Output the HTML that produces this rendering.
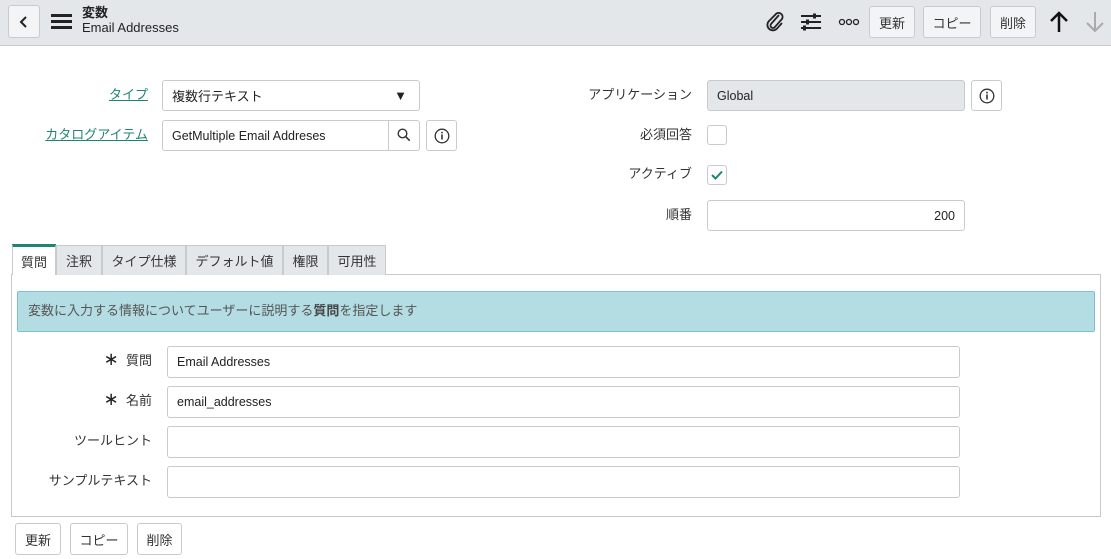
<!DOCTYPE html>
<html><head><meta charset="utf-8"><style>
*{box-sizing:border-box;margin:0;padding:0}
body{width:1111px;height:559px;background:#fff;font-family:"Liberation Sans","Noto Sans CJK JP",sans-serif;font-size:13px;color:#333;position:relative;overflow:hidden}
.a{position:absolute}
.hdr{left:0;top:0;width:1111px;height:46px;background:#e4e7ea;border-bottom:1px solid #c8cacc}
.btn{position:absolute;background:#f3f4f5;border:1px solid #c8cacc;border-radius:3px;display:flex;align-items:center;justify-content:center;font-size:13px;color:#333}
.wb{background:#fff}
.inp{position:absolute;border:1px solid #c8cacc;border-radius:3px;background:#fff;display:flex;align-items:center;padding:0 9px;font-size:13px;color:#222}
.lbl{position:absolute;text-align:right;font-size:13px;color:#333;line-height:16px}
.lnk{color:#1f8476;text-decoration:underline}
.tab{position:absolute;top:245px;height:30px;background:#e4e7ea;border:1px solid #c8cacc;border-bottom:none;display:flex;align-items:center;justify-content:center;font-size:13px;color:#333}
</style></head><body>
<div class="a hdr"></div>
<div class="btn" style="left:8px;top:5px;width:32px;height:33px"><svg width="12" height="14" viewBox="0 0 12 14"><path d="M8 2L3 7l5 5" fill="none" stroke="#222" stroke-width="2"/></svg></div>
<svg class="a" style="left:51px;top:13px" width="21" height="17"><rect y="1" width="21" height="3" fill="#222"/><rect y="7" width="21" height="3" fill="#222"/><rect y="13" width="21" height="3" fill="#222"/></svg>
<div class="a" style="left:82px;top:5px;font-weight:bold;font-size:13px;line-height:15px;color:#222">変数</div>
<div class="a" style="left:82px;top:20px;font-size:13px;line-height:15px;color:#222">Email Addresses</div>
<svg class="a" style="left:764px;top:10px" width="22" height="22" viewBox="0 0 22 22"><path d="M15 5L7 14a2.5 2.5 0 0 0 3.5 3.5L18 9a4 4 0 0 0-5.5-5.5L5 11a5.5 5.5 0 0 0 7.8 7.8L18 13" fill="none" stroke="#222" stroke-width="1.8"/></svg>
<svg class="a" style="left:800px;top:12px" width="22" height="20"><path d="M1 4h20M1 10h20M1 16h20" stroke="#222" stroke-width="2"/><rect x="13" y="1.5" width="3" height="5" fill="#222"/><rect x="6" y="7.5" width="3" height="5" fill="#222"/><rect x="3" y="13.5" width="3" height="5" fill="#222"/></svg>
<svg class="a" style="left:838px;top:18px" width="22" height="8"><circle cx="4" cy="4" r="2.5" fill="none" stroke="#222" stroke-width="1.3"/><circle cx="11" cy="4" r="2.5" fill="none" stroke="#222" stroke-width="1.3"/><circle cx="18" cy="4" r="2.5" fill="none" stroke="#222" stroke-width="1.3"/></svg>
<div class="btn" style="left:869px;top:6px;width:46px;height:32px">更新</div>
<div class="btn" style="left:923px;top:6px;width:58px;height:32px">コピー</div>
<div class="btn" style="left:990px;top:6px;width:46px;height:32px">削除</div>
<svg class="a" style="left:1049px;top:11px" width="20" height="22"><path d="M10 21V3M2 10l8-8 8 8" fill="none" stroke="#111" stroke-width="2.5"/></svg>
<svg class="a" style="left:1085px;top:11px" width="20" height="22"><path d="M10 1v18M2 12l8 8 8-8" fill="none" stroke="#aaa" stroke-width="2"/></svg>

<div class="lbl" style="left:60px;top:87px;width:88px"><span class="lnk">タイプ</span></div>
<div class="inp" style="left:162px;top:80px;width:258px;height:31px">複数行テキスト<span style="position:absolute;right:12px;font-size:13px">▼</span></div>
<div class="lbl" style="left:20px;top:127px;width:128px"><span class="lnk">カタログアイテム</span></div>
<div class="inp" style="left:162px;top:120px;width:258px;height:31px;font-size:12.5px">GetMultiple Email Addreses</div>
<div class="a" style="left:388px;top:120px;width:1px;height:31px;background:#c8cacc"></div>
<svg class="a" style="left:397px;top:128px" width="14" height="14"><circle cx="5.5" cy="5.5" r="4.3" fill="none" stroke="#333" stroke-width="1.4"/><path d="M8.7 8.7l4 4" stroke="#333" stroke-width="1.6"/></svg>
<div class="btn wb" style="left:426px;top:120px;width:31px;height:31px"><svg width="16" height="16"><circle cx="8" cy="8" r="6.8" fill="none" stroke="#333" stroke-width="1.3"/><rect x="7.2" y="6.5" width="1.6" height="5" fill="#333"/><rect x="7.2" y="3.8" width="1.6" height="1.6" fill="#333"/></svg></div>

<div class="lbl" style="left:540px;top:87px;width:152px">アプリケーション</div>
<div class="inp" style="left:707px;top:80px;width:258px;height:31px;background:#e4e7ea;font-size:12.5px">Global</div>
<div class="btn wb" style="left:971px;top:80px;width:31px;height:31px"><svg width="16" height="16"><circle cx="8" cy="8" r="6.8" fill="none" stroke="#333" stroke-width="1.3"/><rect x="7.2" y="6.5" width="1.6" height="5" fill="#333"/><rect x="7.2" y="3.8" width="1.6" height="1.6" fill="#333"/></svg></div>
<div class="lbl" style="left:540px;top:127px;width:152px">必須回答</div>
<div class="a" style="left:707px;top:125px;width:20px;height:20px;border:1px solid #c8cacc;border-radius:3px"></div>
<div class="lbl" style="left:540px;top:166px;width:152px">アクティブ</div>
<div class="a" style="left:707px;top:165px;width:20px;height:20px;border:1px solid #c8cacc;border-radius:3px"><svg width="18" height="18"><path d="M4 9l3.5 3.5L14 5.5" fill="none" stroke="#1f8476" stroke-width="2"/></svg></div>
<div class="lbl" style="left:540px;top:207px;width:152px">順番</div>
<div class="inp" style="left:707px;top:200px;width:258px;height:31px;justify-content:flex-end;font-size:12.5px">200</div>

<div class="a" style="left:11px;top:274px;width:1090px;height:243px;border:1px solid #c8cacc"></div>
<div class="tab" style="left:12px;width:44px;background:#fff;border-top:3px solid #1f8476;height:31px;top:244px">質問</div>
<div class="tab" style="left:56px;width:46px">注釈</div>
<div class="tab" style="left:102px;width:84px">タイプ仕様</div>
<div class="tab" style="left:186px;width:97px">デフォルト値</div>
<div class="tab" style="left:283px;width:45px">権限</div>
<div class="tab" style="left:328px;width:58px">可用性</div>
<div class="a" style="left:17px;top:291px;width:1078px;height:41px;background:#b3dce3;border:1px solid #7cc3d2;border-radius:2px;padding:11px 10px;font-size:13px;line-height:16px;color:#555">変数に入力する情報についてユーザーに説明する<b style="color:#444">質問</b>を指定します</div>

<div class="lbl" style="left:40px;top:353px;width:112px"><span style="font-size:18px;line-height:13px;color:#222">∗</span>&nbsp; 質問</div>
<div class="inp" style="left:167px;top:346px;width:793px;height:32px;font-size:12.5px">Email Addresses</div>
<div class="lbl" style="left:40px;top:393px;width:112px"><span style="font-size:18px;line-height:13px;color:#222">∗</span>&nbsp; 名前</div>
<div class="inp" style="left:167px;top:386px;width:793px;height:32px;font-size:12.5px">email_addresses</div>
<div class="lbl" style="left:20px;top:433px;width:132px">ツールヒント</div>
<div class="inp" style="left:167px;top:426px;width:793px;height:32px"></div>
<div class="lbl" style="left:20px;top:473px;width:132px">サンプルテキスト</div>
<div class="inp" style="left:167px;top:466px;width:793px;height:32px"></div>

<div class="btn" style="left:15px;top:523px;width:46px;height:32px;background:#fff">更新</div>
<div class="btn" style="left:70px;top:523px;width:58px;height:32px;background:#fff">コピー</div>
<div class="btn" style="left:137px;top:523px;width:45px;height:32px;background:#fff">削除</div>
</body></html>
